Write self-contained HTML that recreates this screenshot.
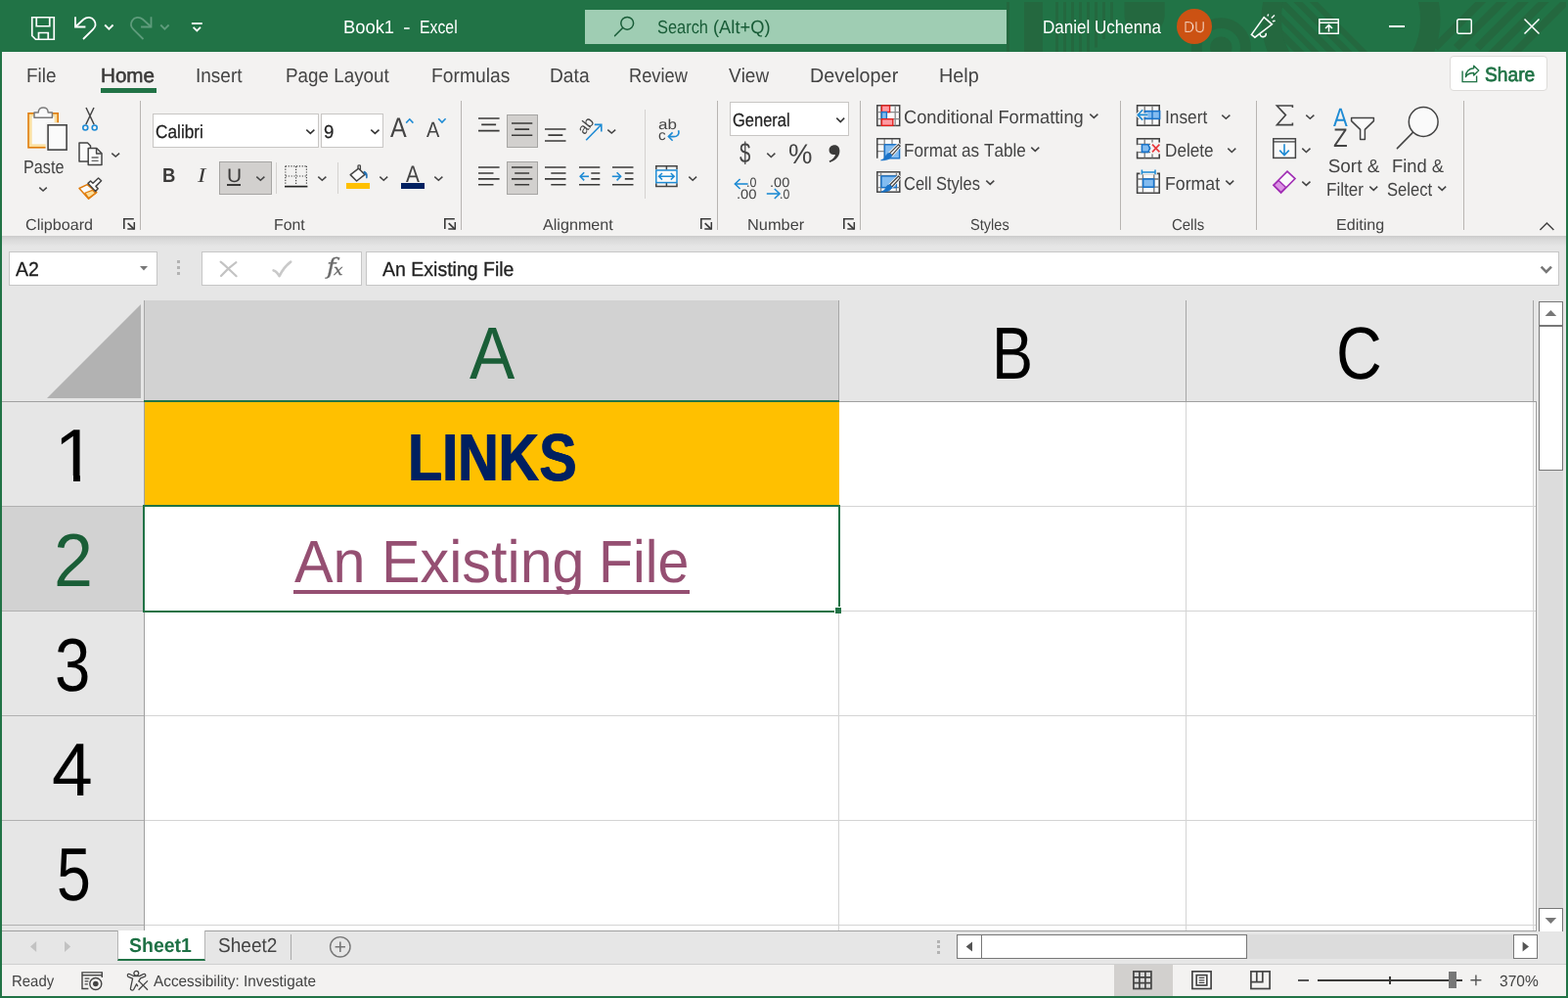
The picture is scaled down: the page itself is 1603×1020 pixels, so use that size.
<!DOCTYPE html>
<html lang="en"><head><meta charset="utf-8"><title>Book1 - Excel</title>
<style>
*{margin:0;padding:0;box-sizing:border-box}
html,body{width:1603px;height:1020px;overflow:hidden;background:#217346}
body{position:relative;font-family:"Liberation Sans",sans-serif;color:#444}
.r,.t,.i{position:absolute;display:block}
.t{white-space:nowrap;transform-origin:0 0;text-rendering:geometricPrecision;font-kerning:none}
.i{overflow:visible}
#app{position:absolute;left:0;top:0;width:1603px;height:1020px;will-change:transform}
</style></head>
<body>
<div id="app">
<!-- sec_title -->
<div class="r" style="left:0px;top:0px;width:1603px;height:53px;background:#217346;"></div>
<svg class="i" style="left:0px;top:0px;overflow:hidden;" width="1603" height="53" viewBox="0 0 1603 53"><defs><clipPath id="cpd"><circle cx="1381" cy="19.5" r="71.6"/></clipPath><clipPath id="cpt"><rect x="1029" y="2" width="572" height="51"/></clipPath></defs><g clip-path="url(#cpt)" fill="#24683f"><rect x="1029" y="2" width="3" height="51"/><rect x="1047" y="2" width="19" height="51"/><rect x="1079" y="2" width="3" height="51"/><rect x="1087" y="2" width="3" height="51"/><rect x="1095" y="2" width="3" height="51"/><rect x="1103" y="2" width="3" height="51"/><rect x="1111" y="2" width="3" height="51"/><rect x="1119" y="2" width="3" height="46.5"/><rect x="1127" y="2" width="3" height="38"/><rect x="1135" y="2" width="3" height="19.5"/><path d="M1149.5 2H1190.7V15A20.6 20.6 0 0 1 1149.5 15Z"/><circle cx="1248.3" cy="48.7" r="25.1" fill="none" stroke="#24683f" stroke-width="10.8"/><circle cx="1248.3" cy="48.7" r="11.2"/><circle cx="1381" cy="19.5" r="81.3" fill="none" stroke="#24683f" stroke-width="20.5"/><g clip-path="url(#cpd)"><path d="M1303.6 0L1312.9 0L1372.9 60L1363.6 60Z"/><path d="M1320.4 0L1329.3 0L1389.3 60L1380.4 60Z"/><path d="M1336.8 0L1345 0L1405 60L1396.8 60Z"/><path d="M1287.7 0L1295.5 0L1355.5 60L1347.7 60Z"/><path d="M1270 0L1280.3 0L1340.3 60L1330 60Z"/><path d="M1253 0L1263 0L1323 60L1313 60Z"/></g><path d="M1508.4 2L1519.2 2L1469.8 51.4L1464.4 46Z"/><path d="M1530 2L1541.2 2L1491.6 51.6L1486 46Z"/><path d="M1551.8 2L1562.9 2L1513.35 51.55L1507.8 46Z"/><path d="M1572.6 2L1583.4 2L1510 75.4L1504.6 70Z"/><path d="M1595 2L1606 2L1532.5 75.5L1527 70Z"/></g></svg>
<svg class="i" style="left:30px;top:15px;" width="28" height="28" viewBox="0 0 28 28"><g fill="none" stroke="#fff" stroke-width="1.7"><path d="M2.75 2.75H25.25V25.25H6.5L2.75 21.5Z"/><path d="M7.25 2.75V11.75H20.75V2.75"/><path d="M9.5 25.25V18.5H19.25V25.25"/></g></svg>
<svg class="i" style="left:74px;top:15px;" width="28" height="28" viewBox="0 0 28 28"><g fill="none" stroke="#fff" stroke-width="1.8" stroke-linecap="butt" stroke-linejoin="miter"><path d="M3 2.2V12.5H13.4"/><path d="M3.5 12L11.5 4.8C15 1.8 20 2.5 22.3 6C24.3 9.2 23.6 12.6 21 15.2L11 25"/></g></svg>
<svg class="i" style="left:105px;top:23px;" width="12" height="9" viewBox="0 0 12 9"><path d="M2.2 2.5L6.4 6.7L10.6 2.5" fill="none" stroke="#fff" stroke-width="1.8"/></svg>
<svg class="i" style="left:131px;top:15px;" width="28" height="28" viewBox="0 0 28 28"><g fill="none" stroke="#5f9c7c" stroke-width="1.8" stroke-linecap="butt" stroke-linejoin="miter"><path d="M23.5 2.2V12.5H13.1"/><path d="M23 12L15 4.8C11.5 1.8 6.5 2.5 4.2 6C2.2 9.2 2.9 12.6 5.5 15.2L15.5 25"/></g></svg>
<svg class="i" style="left:162px;top:23px;" width="12" height="9" viewBox="0 0 12 9"><path d="M2.2 2.5L6.4 6.7L10.6 2.5" fill="none" stroke="#5f9c7c" stroke-width="1.8"/></svg>
<svg class="i" style="left:194px;top:21px;" width="15" height="13" viewBox="0 0 15 13"><g fill="none" stroke="#fff" stroke-width="1.8"><path d="M1.9 3H12.8"/><path d="M3.6 6.9L7.3 10.4L11 6.9"/></g></svg>
<span class="t" style="left:350.59px;top:18px;font-size:18.9px;line-height:21px;color:#fff;transform:scaleX(0.9723);">Book1</span>
<span class="t" style="left:411.88px;top:18px;font-size:18.9px;line-height:21px;color:#fff;transform:scaleX(1.2136);">-</span>
<span class="t" style="left:428.8px;top:18px;font-size:18.9px;line-height:21px;color:#fff;transform:scaleX(0.8364);">Excel</span>
<div class="r" style="left:598px;top:10px;width:431px;height:35px;background:#9fcdb3;"></div>
<svg class="i" style="left:626px;top:15px;" width="24" height="24" viewBox="0 0 24 24"><g fill="none" stroke="#185c37" stroke-width="1.5"><circle cx="15.2" cy="8.8" r="6.4"/><path d="M10.6 13.4L2.6 21.6" stroke-linecap="round"/></g></svg>
<span class="t" style="left:672.15px;top:18px;font-size:18.9px;line-height:21px;color:#185c37;transform:scaleX(0.8685);">Search</span>
<span class="t" style="left:728.76px;top:18px;font-size:18.9px;line-height:21px;color:#185c37;transform:scaleX(0.9701);">(Alt+Q)</span>
<span class="t" style="left:1065.6px;top:18px;font-size:18.9px;line-height:21px;color:#fff;transform:scaleX(0.9004);">Daniel Uchenna</span>
<div class="r" style="left:1203px;top:9px;width:36px;height:36px;background:#cc5213;border-radius:50%;"></div>
<span class="t" style="left:1209.64px;top:20px;font-size:16px;line-height:17px;color:#fdf3ee;transform:scaleX(0.9581);-webkit-text-stroke:0.45px #cc5213;">DU</span>
<svg class="i" style="left:1277px;top:13px;" width="28" height="27" viewBox="0 0 28 27"><g fill="none" stroke="#fff" stroke-width="1.6" stroke-linejoin="miter"><path d="M2.4 22.4L15.2 4.6L23.4 11.8L5.9 25.2Z"/><path d="M11.2 22C11.4 26 17.8 25.4 17.2 20.8"/><path d="M18.9 3.6L19.7 1.4M22.8 5.6L26 2.4M23.9 8.8L26.6 8.3" stroke-width="1.4"/></g></svg>
<svg class="i" style="left:1347px;top:18px;" width="23" height="18" viewBox="0 0 23 18"><g fill="none" stroke="#fff" stroke-width="1.5"><path d="M1.75 1.75H21.25V16.25H1.75Z"/><path d="M1.75 5.2H21.25"/><path d="M11.5 14.5V8M8 11L11.5 7.6L15 11"/></g></svg>
<div class="r" style="left:1420px;top:26px;width:16px;height:1.5px;background:#fff;"></div>
<svg class="i" style="left:1488px;top:18px;" width="18" height="18" viewBox="0 0 18 18"><rect x="1.75" y="1.75" width="14.5" height="14.5" rx="1.5" fill="none" stroke="#fff" stroke-width="1.5"/></svg>
<svg class="i" style="left:1557px;top:18px;" width="18" height="18" viewBox="0 0 18 18"><path d="M1.5 1.5L16.5 16.5M16.5 1.5L1.5 16.5" fill="none" stroke="#fff" stroke-width="1.5"/></svg>
<!-- sec_tabs -->
<div class="r" style="left:2px;top:53px;width:1599px;height:188px;background:#f3f2f1;"></div>
<span class="t" style="left:27.05px;top:67px;font-size:20.35px;line-height:22px;color:#444;transform:scaleX(0.9299);">File</span>
<span class="t" style="left:199.75px;top:67px;font-size:20.35px;line-height:22px;color:#444;transform:scaleX(0.9331);">Insert</span>
<span class="t" style="left:292.15px;top:67px;font-size:20.35px;line-height:22px;color:#444;transform:scaleX(0.9256);">Page Layout</span>
<span class="t" style="left:441.32px;top:67px;font-size:20.35px;line-height:22px;color:#444;transform:scaleX(0.9466);">Formulas</span>
<span class="t" style="left:561.92px;top:67px;font-size:20.35px;line-height:22px;color:#444;transform:scaleX(0.9439);">Data</span>
<span class="t" style="left:643px;top:67px;font-size:20.35px;line-height:22px;color:#444;transform:scaleX(0.8986);">Review</span>
<span class="t" style="left:745.42px;top:67px;font-size:20.35px;line-height:22px;color:#444;transform:scaleX(0.9326);">View</span>
<span class="t" style="left:827.88px;top:67px;font-size:20.35px;line-height:22px;color:#444;transform:scaleX(0.973);">Developer</span>
<span class="t" style="left:960.17px;top:67px;font-size:20.35px;line-height:22px;color:#444;transform:scaleX(0.9738);">Help</span>
<span class="t" style="left:103.21px;top:67px;font-size:20.35px;line-height:22px;color:#3b3a39;transform:scaleX(1.0134);-webkit-text-stroke:0.55px #3b3a39;">Home</span>
<div class="r" style="left:103px;top:90px;width:57px;height:5px;background:#217346;"></div>
<div class="r" style="left:1482px;top:57px;width:100px;height:36px;background:#fff;border:1px solid #dddbd9;border-radius:4px;"></div>
<svg class="i" style="left:1493.8px;top:66px;" width="20" height="19" viewBox="0 0 20 19"><g fill="none" stroke="#217346" stroke-width="1.4" stroke-linejoin="round"><path d="M1.1 6.4V17.6H15.6V11.6" stroke-linejoin="miter"/><path d="M12.7 1.3L17.7 6.1L12.7 11.1V8.5C9 8.5 6.2 9.6 4.4 12.6C4.6 7.6 7.8 4.2 12.7 3.8Z"/></g></svg>
<span class="t" style="left:1517.93px;top:66px;font-size:20.35px;line-height:22px;color:#217346;transform:scaleX(0.9433);-webkit-text-stroke:0.7px #217346;">Share</span>
<!-- sec_ribbon -->
<!-- rib_clip -->
<svg class="i" style="left:26px;top:107px;" width="46" height="50" viewBox="0 0 46 50"><rect x="3" y="8.8" width="30.2" height="35" fill="#fbdf9e" stroke="#e07c0c" stroke-width="1.6"/>
<rect x="6.6" y="12" width="23" height="28.4" fill="#fafafa"/>
<path d="M9 13.2V8H13.2C13.2 4.6 15.6 2.9 18.2 2.9C20.8 2.9 23.2 4.6 23.2 8H27.4V13.2Z" fill="#fafafa" stroke="#7a7a7a" stroke-width="1.5" stroke-linejoin="round"/>
<rect x="22.3" y="20" width="20.6" height="26.9" fill="#fafafa" stroke="#f3f2f1" stroke-width="3.4"/>
<rect x="23.1" y="20.8" width="19" height="25.3" fill="#fafafa" stroke="#444" stroke-width="1.6"/></svg>
<span class="t" style="left:24.07px;top:161px;font-size:18.9px;line-height:21px;color:#444;transform:scaleX(0.8576);">Paste</span>
<svg class="i" style="left:39.2px;top:189.8px;" width="10.1" height="6.8" viewBox="0 0 10.1 6.8"><path d="M1.3 1.6L5.05 5.1L8.8 1.6" fill="none" stroke="#444" stroke-width="1.5"/></svg>
<svg class="i" style="left:83px;top:108.5px;" width="18" height="26" viewBox="0 0 18 26"><g fill="none" stroke-width="1.5"><path d="M5 1L13.2 18.2M13 1L4.8 18.2" stroke="#444"/>
<circle cx="4.3" cy="21.5" r="2.5" stroke="#1e8bd4" stroke-width="1.6"/><circle cx="13.7" cy="21.5" r="2.5" stroke="#1e8bd4" stroke-width="1.6"/></g></svg>
<svg class="i" style="left:79.5px;top:144.5px;" width="26" height="26" viewBox="0 0 26 26"><g fill="#fafafa" stroke="#444" stroke-width="1.5" stroke-linejoin="round"><path d="M1 1H9.5L12.5 4V20H1Z"/>
<path d="M10.2 6.5H18.8L24 11.7V23.6H10.2Z"/><path d="M18.6 6.8V12H23.8" fill="none"/><path d="M13.6 16H20.6M13.6 19.4H20.6" stroke="#666" stroke-width="1.3"/></g></svg>
<svg class="i" style="left:113.2px;top:155px;" width="10.4" height="6.8" viewBox="0 0 10.4 6.8"><path d="M1.3 1.6L5.2 5.1L9.1 1.6" fill="none" stroke="#444" stroke-width="1.5"/></svg>
<svg class="i" style="left:80px;top:180.5px;" width="26" height="24" viewBox="0 0 26 24"><g stroke-linejoin="round"><path d="M1 11.5L9.2 7.6L18.8 15.6L10.6 22.2Z" fill="#fafafa" stroke="#e07c0c" stroke-width="1.5"/>
<path d="M6.8 16.2L14.6 13.4L17.4 16.4L10.6 21.6Z" fill="#fbdf9e" stroke="#e07c0c" stroke-width="1.2"/>
<path d="M10 6.4L12.6 4L15 6.3L20.6 1L23.6 3.8L18 9.4L20.2 11.8L17.6 14.6Z" fill="#fafafa" stroke="#444" stroke-width="1.5"/></g></svg>
<span class="t" style="left:25.68px;top:222px;font-size:16px;line-height:17px;color:#444;transform:scaleX(1.0069);">Clipboard</span>
<svg class="i" style="left:126px;top:223px;" width="13" height="13" viewBox="0 0 13 13"><g fill="none" stroke="#3a3a3a" stroke-width="1.6"><path d="M0.8 11V0.8H10.8"/><path d="M4.7 5.1L11 11.2" stroke-width="1.7"/><path d="M4.3 11.1H11.3V4.1" stroke-width="1.5"/></g></svg>
<div class="r" style="left:143px;top:103px;width:1px;height:132px;background:#b8b5b2;"></div>
<!-- rib_font -->
<div class="r" style="left:156px;top:116px;width:170px;height:35px;background:#fff;border:1px solid #c8c6c4;"></div>
<span class="t" style="left:158.82px;top:125px;font-size:18.9px;line-height:21px;color:#222;transform:scaleX(0.9137);-webkit-text-stroke:0.25px #222;">Calibri</span>
<svg class="i" style="left:312px;top:130.8px;" width="10.7" height="7.1" viewBox="0 0 10.7 7.1"><path d="M1.3 1.6L5.35 5.4L9.4 1.6" fill="none" stroke="#333" stroke-width="1.5"/></svg>
<div class="r" style="left:328px;top:116px;width:64px;height:35px;background:#fff;border:1px solid #c8c6c4;"></div>
<span class="t" style="left:330.93px;top:125px;font-size:18.9px;line-height:21px;color:#222;transform:scaleX(0.9851);-webkit-text-stroke:0.25px #222;">9</span>
<svg class="i" style="left:378px;top:130.8px;" width="10.8" height="7.1" viewBox="0 0 10.8 7.1"><path d="M1.3 1.6L5.4 5.4L9.5 1.6" fill="none" stroke="#333" stroke-width="1.5"/></svg>
<span class="t" style="left:399.35px;top:114px;font-size:28.3px;line-height:32px;color:#444;transform:scaleX(0.8846);">A</span>
<svg class="i" style="left:413.6px;top:120.2px;" width="10" height="7" viewBox="0 0 10 7"><path d="M1.2 5.6L4.8 1.8L8.4 5.6" fill="none" stroke="#1e8bd4" stroke-width="1.6"/></svg>
<span class="t" style="left:435.86px;top:120px;font-size:22px;line-height:25px;color:#444;transform:scaleX(0.9049);">A</span>
<svg class="i" style="left:447.4px;top:120.4px;" width="10" height="7" viewBox="0 0 10 7"><path d="M1.2 1.2L4.9 5L8.6 1.2" fill="none" stroke="#1e8bd4" stroke-width="1.6"/></svg>
<span class="t" style="left:165.56px;top:169px;font-size:20.2px;line-height:22px;color:#3b3a39;transform:scaleX(0.9173);font-weight:700;">B</span>
<span class="t" style="left:201.7px;top:167px;font-size:21px;line-height:24px;color:#3b3a39;transform:scaleX(1.1906);font-style:italic;font-family:'Liberation Serif',serif;">I</span>
<div class="r" style="left:224px;top:165px;width:54px;height:34px;background:#d2d0ce;border:1px solid #a6a5a3;"></div>
<span class="t" style="left:231.58px;top:169px;font-size:19.6px;line-height:22px;color:#3b3a39;transform:scaleX(1.0692);">U</span>
<div class="r" style="left:232.3px;top:188.2px;width:13.8px;height:1.5px;background:#3b3a39;"></div>
<svg class="i" style="left:260.8px;top:179px;" width="10.7" height="7" viewBox="0 0 10.7 7"><path d="M1.3 1.6L5.35 5.3L9.4 1.6" fill="none" stroke="#444" stroke-width="1.5"/></svg>
<div class="r" style="left:282px;top:166px;width:1px;height:32px;background:#d4d2d0;"></div>
<svg class="i" style="left:291px;top:169px;" width="24" height="23" viewBox="0 0 24 23"><g fill="none" stroke="#444" stroke-width="1.2" stroke-dasharray="1.2 1.6"><path d="M0.8 0.8H22.6M0.8 0.8V20M22.4 0.8V20M11.6 1V20M1 11H22.4"/></g><path d="M0 21.6H23.4" stroke="#222" stroke-width="1.7"/></svg>
<svg class="i" style="left:324px;top:179px;" width="10.7" height="7" viewBox="0 0 10.7 7"><path d="M1.3 1.6L5.35 5.3L9.4 1.6" fill="none" stroke="#444" stroke-width="1.5"/></svg>
<div class="r" style="left:345px;top:166px;width:1px;height:32px;background:#d4d2d0;"></div>
<svg class="i" style="left:357px;top:168.4px;" width="21" height="19" viewBox="0 0 21 19"><g fill="none" stroke-linejoin="round"><path d="M9.6 4.2L16 10.4L7.6 17L1.2 10.6Z" fill="#fafafa" stroke="#444" stroke-width="1.5"/><path d="M9 4.6V1.6C9 0.6 11.4 0.6 11.4 1.6V6" stroke="#444" stroke-width="1.3"/>
<path d="M15 7.2C17.8 7.6 19 10.6 17.8 14.2C17.6 11.6 17 10.2 15.6 9.4Z" fill="#1e6fb4" stroke="#1e6fb4" stroke-width="1"/></g></svg>
<div class="r" style="left:354px;top:187px;width:24px;height:6px;background:#ffc000;"></div>
<svg class="i" style="left:387px;top:179px;" width="10.5" height="7" viewBox="0 0 10.5 7"><path d="M1.3 1.6L5.25 5.3L9.2 1.6" fill="none" stroke="#444" stroke-width="1.5"/></svg>
<span class="t" style="left:415.26px;top:165px;font-size:24px;line-height:27px;color:#444;transform:scaleX(0.8672);">A</span>
<div class="r" style="left:410px;top:187px;width:24px;height:6px;background:#002060;"></div>
<svg class="i" style="left:442.9px;top:179px;" width="10.7" height="7" viewBox="0 0 10.7 7"><path d="M1.3 1.6L5.35 5.3L9.4 1.6" fill="none" stroke="#444" stroke-width="1.5"/></svg>
<span class="t" style="left:279.6px;top:222px;font-size:16px;line-height:17px;color:#444;transform:scaleX(0.9907);">Font</span>
<svg class="i" style="left:454px;top:223px;" width="13" height="13" viewBox="0 0 13 13"><g fill="none" stroke="#3a3a3a" stroke-width="1.6"><path d="M0.8 11V0.8H10.8"/><path d="M4.7 5.1L11 11.2" stroke-width="1.7"/><path d="M4.3 11.1H11.3V4.1" stroke-width="1.5"/></g></svg>
<div class="r" style="left:471px;top:103px;width:1px;height:132px;background:#b8b5b2;"></div>
<!-- rib_align -->
<div class="r" style="left:518px;top:117px;width:32px;height:34px;background:#d2d0ce;border:1px solid #a6a5a3;"></div>
<div class="r" style="left:518px;top:165px;width:32px;height:34px;background:#d2d0ce;border:1px solid #a6a5a3;"></div>
<svg class="i" style="left:488.3px;top:119.2px;" width="23.6" height="16.6" viewBox="0 0 23.6 16.6"><path d="M1 2H22.6M4.2 8.4H19.1M1 14.6H22.6" fill="none" stroke="#3b3a39" stroke-width="1.6"/></svg>
<svg class="i" style="left:522.4px;top:124px;" width="23.3" height="16.2" viewBox="0 0 23.3 16.2"><path d="M1 2H22.3M4.2 8.1H19.1M1 14.2H22.3" fill="none" stroke="#3b3a39" stroke-width="1.6"/></svg>
<svg class="i" style="left:556.3px;top:130.1px;" width="23.5" height="16" viewBox="0 0 23.5 16"><path d="M1 2H22.5M4.4 8.1H19.3M1 14H22.5" fill="none" stroke="#3b3a39" stroke-width="1.6"/></svg>
<span class="t" style="left:591px;top:119.5px;font-size:15.5px;line-height:18px;color:#444;transform:rotate(-52deg);transform-origin:50% 50%;">ab</span>
<svg class="i" style="left:597px;top:125px;" width="20" height="20" viewBox="0 0 20 20"><g fill="none" stroke="#1e8bd4" stroke-width="1.6"><path d="M2.2 18.2L17.4 2.8"/><path d="M10.8 2.4H17.8V9.4"/></g></svg>
<svg class="i" style="left:620.1px;top:131.1px;" width="10.5" height="6.8" viewBox="0 0 10.5 6.8"><path d="M1.3 1.6L5.25 5.1L9.2 1.6" fill="none" stroke="#444" stroke-width="1.5"/></svg>
<svg class="i" style="left:488.3px;top:169.3px;" width="23.6" height="21.8" viewBox="0 0 23.6 21.8"><path d="M1 2H22.6M1 8H16.5M1 13.9H22.6M1 19.8H16.5" fill="none" stroke="#3b3a39" stroke-width="1.6"/></svg>
<svg class="i" style="left:522.4px;top:169.3px;" width="23.3" height="21.8" viewBox="0 0 23.3 21.8"><path d="M1 2H22.3M4.2 8H19.1M1 13.9H22.3M4.2 19.8H19.1" fill="none" stroke="#3b3a39" stroke-width="1.6"/></svg>
<svg class="i" style="left:556.3px;top:169.3px;" width="23.5" height="21.8" viewBox="0 0 23.5 21.8"><path d="M1 2H22.5M7.3 8H22.5M1 13.9H22.5M7.3 19.8H22.5" fill="none" stroke="#3b3a39" stroke-width="1.6"/></svg>
<svg class="i" style="left:591.3px;top:169.3px;" width="23.3" height="21.8" viewBox="0 0 23.3 21.8"><path d="M1 2H22.3M13.3 8H22.3M13.3 13.9H22.3M1 19.8H22.3" fill="none" stroke="#3b3a39" stroke-width="1.6"/></svg>
<svg class="i" style="left:591.5px;top:175px;" width="11" height="11" viewBox="0 0 11 11"><g fill="none" stroke="#1e8bd4" stroke-width="1.6"><path d="M1.2 5.3H10"/><path d="M5.2 1.2L1.2 5.3L5.2 9.4"/></g></svg>
<svg class="i" style="left:625.2px;top:169.3px;" width="23.5" height="21.8" viewBox="0 0 23.5 21.8"><path d="M1 2H22.5M13.8 8H22.5M13.8 13.9H22.5M1 19.8H22.5" fill="none" stroke="#3b3a39" stroke-width="1.6"/></svg>
<svg class="i" style="left:625.4px;top:175px;" width="11" height="11" viewBox="0 0 11 11"><g fill="none" stroke="#1e8bd4" stroke-width="1.6"><path d="M0.8 5.3H9.6"/><path d="M5.6 1.2L9.6 5.3L5.6 9.4"/></g></svg>
<div class="r" style="left:659px;top:112px;width:1px;height:91px;background:#d4d2d0;"></div>
<span class="t" style="left:672.98px;top:120px;font-size:14.6px;line-height:16px;color:#444;transform:scaleX(1.1662);">ab</span>
<span class="t" style="left:673.05px;top:131px;font-size:14.6px;line-height:16px;color:#444;transform:scaleX(1.0485);">c</span>
<svg class="i" style="left:681.5px;top:132px;" width="14" height="14" viewBox="0 0 14 14"><g fill="none" stroke="#1e8bd4" stroke-width="1.6"><path d="M11.6 1.2C13 5.6 10 8 6 7.6H1.6"/><path d="M5.6 3.4L1.4 7.6L5.6 11.8"/></g></svg>
<svg class="i" style="left:670px;top:169px;" width="23" height="23" viewBox="0 0 23 23"><g fill="none" stroke-width="1.5"><path d="M0.8 4V0.8H22V4M0.8 18.2V21.6H22V18.2M11.4 0.8V4.6M11.4 17.6V21.6" stroke="#444"/>
<rect x="0.8" y="5" width="21.2" height="12.6" fill="#fafafa" stroke="#1e8bd4"/><path d="M3.6 11.3H19.2M7 8L3.6 11.3L7 14.6M15.8 8L19.2 11.3L15.8 14.6" stroke="#1e8bd4"/></g></svg>
<svg class="i" style="left:703.1px;top:179px;" width="10.4" height="7" viewBox="0 0 10.4 7"><path d="M1.3 1.6L5.2 5.3L9.1 1.6" fill="none" stroke="#444" stroke-width="1.5"/></svg>
<span class="t" style="left:554.57px;top:222px;font-size:16px;line-height:17px;color:#444;transform:scaleX(1.0085);">Alignment</span>
<svg class="i" style="left:716px;top:223px;" width="13" height="13" viewBox="0 0 13 13"><g fill="none" stroke="#3a3a3a" stroke-width="1.6"><path d="M0.8 11V0.8H10.8"/><path d="M4.7 5.1L11 11.2" stroke-width="1.7"/><path d="M4.3 11.1H11.3V4.1" stroke-width="1.5"/></g></svg>
<div class="r" style="left:733px;top:103px;width:1px;height:132px;background:#b8b5b2;"></div>
<!-- rib_number -->
<div class="r" style="left:746px;top:104px;width:122px;height:35px;background:#fff;border:1px solid #c8c6c4;"></div>
<span class="t" style="left:748.97px;top:113px;font-size:18.9px;line-height:21px;color:#222;transform:scaleX(0.8735);-webkit-text-stroke:0.25px #222;">General</span>
<svg class="i" style="left:854px;top:118.8px;" width="10.5" height="7.3" viewBox="0 0 10.5 7.3"><path d="M1.3 1.6L5.25 5.6L9.2 1.6" fill="none" stroke="#333" stroke-width="1.5"/></svg>
<span class="t" style="left:755.58px;top:141px;font-size:29px;line-height:32px;color:#444;transform:scaleX(0.7036);">$</span>
<svg class="i" style="left:783px;top:154.6px;" width="10.7" height="7.2" viewBox="0 0 10.7 7.2"><path d="M1.3 1.6L5.35 5.5L9.4 1.6" fill="none" stroke="#444" stroke-width="1.5"/></svg>
<span class="t" style="left:805.92px;top:142px;font-size:28.5px;line-height:32px;color:#444;transform:scaleX(0.9653);">%</span>
<svg class="i" style="left:846px;top:147px;" width="14" height="20" viewBox="0 0 14 20"><path d="M7.2 1.2C10.6 1.2 12.4 3.8 12.4 7.2C12.4 12.4 8.8 16.6 2.4 19L1.6 17.6C5.4 15.8 7.6 13.6 8 11C4.6 11.6 1.6 9.6 1.6 6.4C1.6 3.4 4 1.2 7.2 1.2Z" fill="#3b3a39"/></svg>
<svg class="i" style="left:749.5px;top:182px;" width="16" height="12" viewBox="0 0 16 12"><g fill="none" stroke="#1e8bd4" stroke-width="1.6"><path d="M1.4 6H14.6"/><path d="M6.6 1L1.4 6L6.6 11"/></g></svg>
<span class="t" style="left:763.16px;top:179px;font-size:13.6px;line-height:15px;color:#444;transform:scaleX(0.9196);">.0</span>
<span class="t" style="left:753.04px;top:191px;font-size:13.6px;line-height:15px;color:#444;transform:scaleX(1.0915);">.00</span>
<span class="t" style="left:787.17px;top:179px;font-size:13.6px;line-height:15px;color:#444;transform:scaleX(1.074);">.00</span>
<svg class="i" style="left:783.4px;top:192.4px;" width="16" height="12" viewBox="0 0 16 12"><g fill="none" stroke="#1e8bd4" stroke-width="1.6"><path d="M0.8 6H13.8"/><path d="M8.8 1L14 6L8.8 11"/></g></svg>
<span class="t" style="left:797.07px;top:191px;font-size:13.6px;line-height:15px;color:#444;transform:scaleX(0.9092);">.0</span>
<span class="t" style="left:764.46px;top:222px;font-size:16px;line-height:17px;color:#444;transform:scaleX(1.023);">Number</span>
<svg class="i" style="left:862px;top:223px;" width="13" height="13" viewBox="0 0 13 13"><g fill="none" stroke="#3a3a3a" stroke-width="1.6"><path d="M0.8 11V0.8H10.8"/><path d="M4.7 5.1L11 11.2" stroke-width="1.7"/><path d="M4.3 11.1H11.3V4.1" stroke-width="1.5"/></g></svg>
<div class="r" style="left:879px;top:103px;width:1px;height:132px;background:#b8b5b2;"></div>
<!-- rib_styles -->
<svg class="i" style="left:895.5px;top:106.8px;" width="25" height="22.5" viewBox="0 0 25 22.5"><rect x="0.8" y="0.8" width="22.9" height="20.6" fill="#fafafa" stroke="#444" stroke-width="1.5"/>
<path d="M4.8 1V21.4M19.2 1V21.4M1 7.6H23.6M1 14.6H23.6" fill="none" stroke="#8a8a8a" stroke-width="1.3"/>
<rect x="5.4" y="0.9" width="8.2" height="6.6" fill="#ff9aa2" stroke="#e0211d" stroke-width="1.4"/>
<rect x="5.4" y="7.6" width="5" height="7" fill="#83bcf0" stroke="#1a73c8" stroke-width="1.4"/><rect x="4.7" y="7.9" width="6.6" height="1" fill="#fafafa" opacity="0"/>
<rect x="5.4" y="14.7" width="11.4" height="6.6" fill="#ff9aa2" stroke="#e0211d" stroke-width="1.4"/></svg>
<span class="t" style="left:923.57px;top:110px;font-size:18.9px;line-height:21px;color:#444;transform:scaleX(0.9667);">Conditional Formatting</span>
<svg class="i" style="left:1113.2px;top:115.1px;" width="10.7" height="7.1" viewBox="0 0 10.7 7.1"><path d="M1.3 1.6L5.35 5.4L9.4 1.6" fill="none" stroke="#444" stroke-width="1.5"/></svg>
<svg class="i" style="left:895.5px;top:141px;" width="26" height="25" viewBox="0 0 26 25"><path d="M1 0.8H23.8V21H1Z" fill="#fafafa" stroke="none"/>
<path d="M8.2 1V21M16 1V21M1 6.6H23.6M1 13.6H23.6" fill="none" stroke="#8a8a8a" stroke-width="1.3"/>
<rect x="8.4" y="6.8" width="15.2" height="14" fill="#83bcf0" stroke="#1a73c8" stroke-width="1.4"/>
<path d="M0.8 20.8V0.8H23.8V6.4" fill="none" stroke="#444" stroke-width="1.5"/><path d="M22.6 6.6 L24.3 8.2 L15.8 17.6 L13.6 15.6Z" fill="#fafafa" stroke="#f3f2f1" stroke-width="3" stroke-linejoin="round"/><path d="M22.6 6.6 L24.3 8.2 L15.8 17.6 L13.6 15.6Z" fill="#fafafa" stroke="#444" stroke-width="1.2" stroke-linejoin="round"/><path d="M13.4 15.4 L16 17.8 C15.2 20.4 11.8 23 4.6 22.8 C7.4 21.8 8.8 20.4 9.4 18.8 C10 17 11.4 15.6 13.4 15.4Z" fill="#1a73c8" stroke="#1a73c8" stroke-width="0.8" stroke-linejoin="round"/></svg>
<span class="t" style="left:923.79px;top:144px;font-size:18.9px;line-height:21px;color:#444;transform:scaleX(0.9075);">Format as Table</span>
<svg class="i" style="left:1053.1px;top:149.2px;" width="10.6" height="7.1" viewBox="0 0 10.6 7.1"><path d="M1.3 1.6L5.3 5.4L9.3 1.6" fill="none" stroke="#444" stroke-width="1.5"/></svg>
<svg class="i" style="left:895.5px;top:175px;" width="26" height="25" viewBox="0 0 26 25"><rect x="0.8" y="0.8" width="23" height="20.4" fill="#fafafa" stroke="#444" stroke-width="1.5"/>
<path d="M4.6 1V21M20.4 1V21M1 4.4H23.6M1 16.6H23.6" fill="none" stroke="#8a8a8a" stroke-width="1.3"/>
<rect x="5" y="5" width="15.4" height="11.6" fill="#83bcf0" stroke="#1a73c8" stroke-width="1.4"/><path d="M22.6 5 L24.3 6.6 L15.8 16 L13.6 14Z" fill="#fafafa" stroke="#f3f2f1" stroke-width="3" stroke-linejoin="round"/><path d="M22.6 5 L24.3 6.6 L15.8 16 L13.6 14Z" fill="#fafafa" stroke="#444" stroke-width="1.2" stroke-linejoin="round"/><path d="M13.4 13.8 L16 16.2 C15.2 18.8 11.8 21.4 4.6 21.2 C7.4 20.2 8.8 18.8 9.4 17.2 C10 15.4 11.4 14 13.4 13.8Z" fill="#1a73c8" stroke="#1a73c8" stroke-width="0.8" stroke-linejoin="round"/></svg>
<span class="t" style="left:923.66px;top:178px;font-size:18.9px;line-height:21px;color:#444;transform:scaleX(0.8729);">Cell Styles</span>
<svg class="i" style="left:1007px;top:183px;" width="10.6" height="7.1" viewBox="0 0 10.6 7.1"><path d="M1.3 1.6L5.3 5.4L9.3 1.6" fill="none" stroke="#444" stroke-width="1.5"/></svg>
<span class="t" style="left:991.94px;top:222px;font-size:16px;line-height:17px;color:#444;transform:scaleX(0.9133);">Styles</span>
<div class="r" style="left:1145px;top:103px;width:1px;height:132px;background:#b8b5b2;"></div>
<!-- rib_cells -->
<svg class="i" style="left:1161px;top:107.2px;" width="26" height="22" viewBox="0 0 26 22"><rect x="1.6" y="0.8" width="22.6" height="20.4" fill="#fafafa" stroke="#444" stroke-width="1.6"/>
<path d="M9.2 1V21M17 1V21M1.6 6.6H24.2M1.6 14.4H24.2" fill="none" stroke="#777" stroke-width="1.3"/>
<rect x="9.6" y="6.6" width="15" height="7.8" fill="#83bcf0" stroke="#1a73c8" stroke-width="1.6"/><path d="M17 6.6V14.4" stroke="#1a73c8" stroke-width="1.4"/>
<path d="M7.2 5.2L2.2 10.4L7.2 15.6M2.4 10.4H12.4" fill="none" stroke="#f3f2f1" stroke-width="4"/>
<path d="M7.2 5.2L2.2 10.4L7.2 15.6M2.4 10.4H12.4" fill="none" stroke="#1e8bd4" stroke-width="1.6"/></svg>
<span class="t" style="left:1190.91px;top:110px;font-size:18.9px;line-height:21px;color:#444;transform:scaleX(0.9144);">Insert</span>
<svg class="i" style="left:1248.1px;top:115.6px;" width="10.7" height="6.9" viewBox="0 0 10.7 6.9"><path d="M1.3 1.6L5.35 5.2L9.4 1.6" fill="none" stroke="#444" stroke-width="1.5"/></svg>
<svg class="i" style="left:1161px;top:141.2px;" width="27" height="22" viewBox="0 0 27 22"><rect x="1.6" y="0.8" width="22.6" height="19.8" fill="#fafafa" stroke="#444" stroke-width="1.6"/>
<path d="M9.2 1V20.4M17 1V20.4M1.6 6.4H24.2M1.6 14.6H24.2" fill="none" stroke="#777" stroke-width="1.3"/>
<rect x="15" y="4.6" width="11" height="11.8" fill="#f3f2f1"/><rect x="0" y="7.2" width="5" height="6.6" fill="#f3f2f1"/>
<path d="M6.4 6.8H12.8L14.6 10.6L12.8 14.4H6.4Z" fill="#83bcf0" stroke="#1a73c8" stroke-width="1.6"/>
<path d="M17 6.6L24.4 14.4M24.4 6.6L17 14.4" fill="none" stroke="#e8383c" stroke-width="1.6"/></svg>
<span class="t" style="left:1190.99px;top:144px;font-size:18.9px;line-height:21px;color:#444;transform:scaleX(0.9073);">Delete</span>
<svg class="i" style="left:1254px;top:149.5px;" width="10.6" height="7.2" viewBox="0 0 10.6 7.2"><path d="M1.3 1.6L5.3 5.5L9.3 1.6" fill="none" stroke="#444" stroke-width="1.5"/></svg>
<svg class="i" style="left:1161px;top:173.4px;" width="27" height="25" viewBox="0 0 27 25"><path d="M1.6 4.4H24.2V24.2H1.6Z" fill="#fafafa" stroke="#444" stroke-width="1.6"/>
<path d="M7.4 4.4V24M18.8 4.4V24M1.6 10H24.2M1.6 18.2H24.2" fill="none" stroke="#777" stroke-width="1.3"/>
<rect x="4.4" y="0" width="17.4" height="5.4" fill="#f3f2f1"/>
<path d="M6.4 0.6V5.2M20 0.6V5.2M6.4 2.9H20" fill="none" stroke="#1e8bd4" stroke-width="1.5"/>
<rect x="7.6" y="10" width="11" height="8.2" fill="#83bcf0" stroke="#1a73c8" stroke-width="1.6"/></svg>
<span class="t" style="left:1190.95px;top:178px;font-size:18.9px;line-height:21px;color:#444;transform:scaleX(0.937);">Format</span>
<svg class="i" style="left:1252.1px;top:183px;" width="10.5" height="7.1" viewBox="0 0 10.5 7.1"><path d="M1.3 1.6L5.25 5.4L9.2 1.6" fill="none" stroke="#444" stroke-width="1.5"/></svg>
<span class="t" style="left:1197.74px;top:222px;font-size:16px;line-height:17px;color:#444;transform:scaleX(0.9335);">Cells</span>
<div class="r" style="left:1284px;top:103px;width:1px;height:132px;background:#b8b5b2;"></div>
<!-- rib_edit -->
<svg class="i" style="left:1303.4px;top:107px;" width="20" height="22" viewBox="0 0 20 22"><path d="M18.4 3V1H2.4L11.4 10.6L2.4 20.6H18.4V18.6" fill="none" stroke="#444" stroke-width="1.6"/></svg>
<svg class="i" style="left:1334px;top:115.6px;" width="10.7" height="6.9" viewBox="0 0 10.7 6.9"><path d="M1.3 1.6L5.35 5.2L9.4 1.6" fill="none" stroke="#444" stroke-width="1.5"/></svg>
<svg class="i" style="left:1300.6px;top:141px;" width="25" height="22" viewBox="0 0 25 22"><rect x="0.8" y="0.8" width="22.6" height="19.6" fill="#fafafa" stroke="#444" stroke-width="1.5"/><path d="M1 3.9H23.4" stroke="#444" stroke-width="1.3"/>
<path d="M12 6.2V17.4M7.2 12.6L12 17.6L16.8 12.6" fill="none" stroke="#1e8bd4" stroke-width="1.6"/></svg>
<svg class="i" style="left:1330px;top:149.5px;" width="10.8" height="7.2" viewBox="0 0 10.8 7.2"><path d="M1.3 1.6L5.4 5.5L9.5 1.6" fill="none" stroke="#444" stroke-width="1.5"/></svg>
<svg class="i" style="left:1300.8px;top:173.8px;" width="24" height="24" viewBox="0 0 24 24"><g stroke-linejoin="miter"><path d="M15 1.2L23 8.6L8.6 23L0.9 15.2Z" fill="#fafafa" stroke="#a02db4" stroke-width="1.6"/>
<path d="M6.2 10.6L13.6 17.6L8.6 22.6L1.2 15.2Z" fill="#db92e4" stroke="#a02db4" stroke-width="1.4"/></g></svg>
<svg class="i" style="left:1330px;top:183.6px;" width="10.8" height="7.1" viewBox="0 0 10.8 7.1"><path d="M1.3 1.6L5.4 5.4L9.5 1.6" fill="none" stroke="#444" stroke-width="1.5"/></svg>
<span class="t" style="left:1363.16px;top:105px;font-size:26.6px;line-height:30px;color:#1e8bd4;transform:scaleX(0.8278);">A</span>
<span class="t" style="left:1362.54px;top:126px;font-size:26.9px;line-height:30px;color:#444;transform:scaleX(0.8957);">Z</span>
<svg class="i" style="left:1380px;top:118.5px;" width="26" height="26" viewBox="0 0 26 26"><path d="M1.6 1.6H24.4V4.6L15.4 13.4V23.4H10.6V13.4L1.6 4.6Z" fill="#fafafa" stroke="#444" stroke-width="1.5" stroke-linejoin="round"/></svg>
<span class="t" style="left:1357.74px;top:160px;font-size:18.9px;line-height:21px;color:#444;">Sort &amp;</span>
<span class="t" style="left:1356.4px;top:184px;font-size:18.9px;line-height:21px;color:#444;transform:scaleX(0.902);">Filter</span>
<svg class="i" style="left:1399.2px;top:188.8px;" width="10.5" height="7.1" viewBox="0 0 10.5 7.1"><path d="M1.3 1.6L5.25 5.4L9.2 1.6" fill="none" stroke="#444" stroke-width="1.5"/></svg>
<svg class="i" style="left:1426px;top:108px;" width="46" height="46" viewBox="0 0 46 46"><circle cx="29.2" cy="16.5" r="14.9" fill="#fafafa" stroke="#444" stroke-width="1.5"/><path d="M18.4 27.4L2.4 43.6" stroke="#444" stroke-width="1.5" stroke-linecap="round"/></svg>
<span class="t" style="left:1423.19px;top:160px;font-size:18.9px;line-height:21px;color:#444;transform:scaleX(0.972);">Find &amp;</span>
<span class="t" style="left:1417.95px;top:184px;font-size:18.9px;line-height:21px;color:#444;transform:scaleX(0.8791);">Select</span>
<svg class="i" style="left:1469.1px;top:188.8px;" width="10.5" height="7.1" viewBox="0 0 10.5 7.1"><path d="M1.3 1.6L5.25 5.4L9.2 1.6" fill="none" stroke="#444" stroke-width="1.5"/></svg>
<span class="t" style="left:1365.58px;top:222px;font-size:16px;line-height:17px;color:#444;transform:scaleX(1.0048);">Editing</span>
<div class="r" style="left:1496px;top:103px;width:1px;height:132px;background:#b8b5b2;"></div>
<svg class="i" style="left:1573px;top:226px;" width="17" height="11" viewBox="0 0 17 11"><path d="M1.4 9L8.4 2L15.4 9" fill="none" stroke="#444" stroke-width="1.5"/></svg>
<!-- sec_formula -->
<div class="r" style="left:2px;top:241px;width:1599px;height:777px;background:#e6e6e6;"></div>
<div class="r" style="left:2px;top:241px;width:1599px;height:11px;background:linear-gradient(#cbcbcb,#d9d9d9 35%,#e6e6e6);"></div>
<div class="r" style="left:9px;top:257px;width:152px;height:35px;background:#fff;border:1px solid #c6c6c6;"></div>
<span class="t" style="left:16.36px;top:265px;font-size:20.35px;line-height:22px;color:#222;transform:scaleX(0.9569);-webkit-text-stroke:0.3px #222;">A2</span>
<svg class="i" style="left:142.5px;top:272px;" width="8" height="5" viewBox="0 0 8 5"><path d="M0 0H8L4 4.4Z" fill="#777"/></svg>
<div class="r" style="left:181px;top:266.4px;width:3px;height:3px;background:#b3b3b3;"></div>
<div class="r" style="left:181px;top:272px;width:3px;height:3px;background:#b3b3b3;"></div>
<div class="r" style="left:181px;top:277.8px;width:3px;height:3px;background:#b3b3b3;"></div>
<div class="r" style="left:206px;top:257px;width:164px;height:35px;background:#fff;border:1px solid #c6c6c6;"></div>
<svg class="i" style="left:224px;top:265.5px;" width="20" height="18" viewBox="0 0 20 18"><path d="M1.6 1.6C6 5 12 11 17.6 16.2M17.4 2.2C12 6 6 11.6 2 16" fill="none" stroke="#c3c3c3" stroke-width="2.2" stroke-linecap="round"/></svg>
<svg class="i" style="left:278px;top:265.5px;" width="21" height="18" viewBox="0 0 21 18"><path d="M1.6 10.4C4 11 6 13 7.6 16.2C10.6 10 14.6 5 19.2 1.6" fill="none" stroke="#c9c9c9" stroke-width="2.6" stroke-linecap="round" stroke-linejoin="round"/></svg>
<span class="t" style="left:333.78px;top:260px;font-size:22.6px;line-height:26px;color:#6a6a6a;transform:scaleX(1.1289);font-style:italic;font-family:'DejaVu Serif',serif;-webkit-text-stroke:0.3px #6a6a6a;">f</span>
<span class="t" style="left:341.36px;top:267px;font-size:15.6px;line-height:19px;color:#6a6a6a;transform:scaleX(1.0774);font-style:italic;font-family:'DejaVu Serif',serif;-webkit-text-stroke:0.3px #6a6a6a;">x</span>
<div class="r" style="left:374px;top:257px;width:1220px;height:35px;background:#fff;border:1px solid #c6c6c6;"></div>
<span class="t" style="left:391.36px;top:265px;font-size:20.35px;line-height:22px;color:#222;transform:scaleX(0.9591);-webkit-text-stroke:0.3px #222;">An Existing File</span>
<svg class="i" style="left:1574px;top:271px;" width="14" height="10" viewBox="0 0 14 10"><path d="M1.6 1.6L6.8 6.8L12 1.6" fill="none" stroke="#777" stroke-width="2.6"/></svg>
<!-- sec_grid -->
<div class="r" style="left:148px;top:411px;width:1423px;height:541px;background:#fff;"></div>
<div class="r" style="left:148px;top:307px;width:709px;height:102px;background:#d2d2d2;"></div>
<div class="r" style="left:2px;top:518px;width:144px;height:106px;background:#d2d2d2;"></div>
<svg class="i" style="left:48px;top:311px;" width="96" height="96" viewBox="0 0 96 96"><path d="M96 0V96H0Z" fill="#b2b2b2"/></svg>
<div class="r" style="left:147px;top:307px;width:1px;height:103px;background:#a6a6a6;"></div>
<div class="r" style="left:857px;top:307px;width:1px;height:103px;background:#a6a6a6;"></div>
<div class="r" style="left:1212px;top:307px;width:1px;height:103px;background:#a6a6a6;"></div>
<div class="r" style="left:1567px;top:307px;width:1px;height:103px;background:#a6a6a6;"></div>
<div class="r" style="left:2px;top:410px;width:1569px;height:1px;background:#a0a0a0;"></div>
<div class="r" style="left:147px;top:410px;width:1px;height:541px;background:#a0a0a0;"></div>
<div class="r" style="left:2px;top:517px;width:145px;height:1px;background:#b0b0b0;"></div>
<div class="r" style="left:2px;top:624px;width:145px;height:1px;background:#b0b0b0;"></div>
<div class="r" style="left:2px;top:731px;width:145px;height:1px;background:#b0b0b0;"></div>
<div class="r" style="left:2px;top:838px;width:145px;height:1px;background:#b0b0b0;"></div>
<div class="r" style="left:2px;top:945px;width:145px;height:1px;background:#b0b0b0;"></div>
<div class="r" style="left:148px;top:517px;width:1423px;height:1px;background:#d4d4d4;"></div>
<div class="r" style="left:148px;top:624px;width:1423px;height:1px;background:#d4d4d4;"></div>
<div class="r" style="left:148px;top:731px;width:1423px;height:1px;background:#d4d4d4;"></div>
<div class="r" style="left:148px;top:838px;width:1423px;height:1px;background:#d4d4d4;"></div>
<div class="r" style="left:148px;top:945px;width:1423px;height:1px;background:#d4d4d4;"></div>
<div class="r" style="left:857px;top:411px;width:1px;height:540px;background:#d4d4d4;"></div>
<div class="r" style="left:1212px;top:411px;width:1px;height:540px;background:#d4d4d4;"></div>
<div class="r" style="left:1567px;top:411px;width:1px;height:540px;background:#d4d4d4;"></div>
<div class="r" style="left:148px;top:411px;width:710px;height:106px;background:#ffc000;"></div>
<div class="r" style="left:147px;top:409px;width:711px;height:2px;background:#217346;"></div>
<div class="r" style="left:146px;top:517px;width:2px;height:108px;background:#217346;"></div>
<div class="r" style="left:146px;top:516px;width:713px;height:110px;background:transparent;border:2px solid #217346;"></div>
<div class="r" style="left:853px;top:620px;width:7px;height:7px;background:#fff;"></div>
<div class="r" style="left:857px;top:620px;width:1px;height:4px;background:#fff;"></div>
<div class="r" style="left:854px;top:621px;width:6px;height:6px;background:#217346;"></div>
<div class="r" style="left:2px;top:951px;width:1569px;height:1px;background:#a0a0a0;"></div>
<div class="r" style="left:1570px;top:410px;width:1px;height:542px;background:#a0a0a0;"></div>
<span class="t" style="left:479.86px;top:320px;font-size:75.6px;line-height:84px;color:#1a5e37;transform:scaleX(0.9176);">A</span>
<span class="t" style="left:1014.42px;top:320px;font-size:75.6px;line-height:84px;color:#000;transform:scaleX(0.8351);">B</span>
<span class="t" style="left:1366.11px;top:320px;font-size:75.6px;line-height:84px;color:#000;transform:scaleX(0.8564);">C</span>
<span class="t" style="left:55.56px;top:424px;font-size:76.6px;line-height:85px;color:#000;">1</span>
<span class="t" style="left:55.09px;top:531px;font-size:76.6px;line-height:85px;color:#1a5e37;transform:scaleX(0.9371);">2</span>
<span class="t" style="left:56.31px;top:638px;font-size:76.6px;line-height:85px;color:#000;transform:scaleX(0.8536);">3</span>
<span class="t" style="left:53.38px;top:745px;font-size:76.6px;line-height:85px;color:#000;transform:scaleX(0.9793);">4</span>
<span class="t" style="left:57.99px;top:852px;font-size:76.6px;line-height:85px;color:#000;transform:scaleX(0.8178);">5</span>
<div class="r" style="left:59px;top:485.8px;width:15.7px;height:7.2px;background:#e6e6e6;"></div>
<div class="r" style="left:81.75px;top:485.8px;width:15px;height:7.2px;background:#e6e6e6;"></div>
<span class="t" style="left:416.84px;top:430px;font-size:68.3px;line-height:76px;color:#002060;transform:scaleX(0.8424);font-weight:700;text-shadow:0.7px 0 0 #002060,-0.7px 0 0 #002060;">LINKS</span>
<span class="t" style="left:300.88px;top:540px;font-size:61px;line-height:68px;color:#954f72;transform:scaleX(0.9726);">An</span>
<span class="t" style="left:389.54px;top:540px;font-size:61px;line-height:68px;color:#954f72;transform:scaleX(0.9719);">Existing</span>
<span class="t" style="left:612px;top:540px;font-size:61px;line-height:68px;color:#954f72;transform:scaleX(0.9395);">File</span>
<div class="r" style="left:300px;top:603px;width:405px;height:4px;background:#954f72;"></div>
<!-- sec_bottom -->
<div class="r" style="left:1571px;top:307px;width:30px;height:645px;background:#e6e6e6;"></div>
<div class="r" style="left:1573px;top:333px;width:25px;height:595px;background:#dcdcdc;"></div>
<div class="r" style="left:1573px;top:308px;width:25px;height:25px;background:#fff;border:1px solid #777;"></div>
<svg class="i" style="left:1579px;top:316px;" width="13" height="8" viewBox="0 0 13 8"><path d="M0.6 7L6.4 1L12.2 7Z" fill="#777"/></svg>
<div class="r" style="left:1573px;top:333px;width:25px;height:148px;background:#fff;border:1px solid #777;"></div>
<div class="r" style="left:1573px;top:928px;width:25px;height:25px;background:#fff;border:1px solid #777;"></div>
<svg class="i" style="left:1579px;top:937px;" width="13" height="8" viewBox="0 0 13 8"><path d="M0.6 1L6.4 7L12.2 1Z" fill="#777"/></svg>
<div class="r" style="left:2px;top:952px;width:1599px;height:33px;background:#e6e6e6;"></div>
<svg class="i" style="left:31px;top:962px;" width="7" height="11" viewBox="0 0 7 11"><path d="M6.2 0V11L0 5.5Z" fill="#c2c2c2"/></svg>
<svg class="i" style="left:66px;top:962px;" width="7" height="11" viewBox="0 0 7 11"><path d="M0 0V11L6.2 5.5Z" fill="#c2c2c2"/></svg>
<div class="r" style="left:120px;top:951px;width:90px;height:31px;background:#fff;border-left:1px solid #b4b4b4;border-right:1px solid #b4b4b4;border-bottom:2px solid #217346;"></div>
<span class="t" style="left:132.04px;top:956px;font-size:20.35px;line-height:22px;color:#1e7145;transform:scaleX(0.9576);font-weight:700;">Sheet1</span>
<span class="t" style="left:222.73px;top:956px;font-size:20.35px;line-height:22px;color:#444;transform:scaleX(0.9368);">Sheet2</span>
<div class="r" style="left:297px;top:955px;width:1px;height:26px;background:#ababab;"></div>
<svg class="i" style="left:336px;top:956px;" width="24" height="24" viewBox="0 0 24 24"><circle cx="11.8" cy="11.8" r="10.2" fill="none" stroke="#777" stroke-width="1.4"/><path d="M6.6 11.8H17M11.8 6.6V17" stroke="#777" stroke-width="1.6"/></svg>
<div class="r" style="left:957.6px;top:961px;width:3px;height:3px;background:#b3b3b3;"></div>
<div class="r" style="left:957.6px;top:966.4px;width:3px;height:3px;background:#b3b3b3;"></div>
<div class="r" style="left:957.6px;top:971.8px;width:3px;height:3px;background:#b3b3b3;"></div>
<div class="r" style="left:1003px;top:955px;width:545px;height:25px;background:#dcdcdc;"></div>
<div class="r" style="left:978px;top:955px;width:26px;height:25px;background:#fff;border:1px solid #777;"></div>
<svg class="i" style="left:987px;top:962px;" width="8" height="11" viewBox="0 0 8 11"><path d="M7 0.4V10.6L0.6 5.5Z" fill="#555"/></svg>
<div class="r" style="left:1003px;top:955px;width:272px;height:25px;background:#fff;border:1px solid #777;"></div>
<div class="r" style="left:1547px;top:955px;width:25px;height:25px;background:#fff;border:1px solid #777;"></div>
<svg class="i" style="left:1556px;top:962px;" width="8" height="11" viewBox="0 0 8 11"><path d="M0.6 0.4V10.6L7 5.5Z" fill="#555"/></svg>
<div class="r" style="left:2px;top:985px;width:1599px;height:33px;background:#f3f2f1;"></div>
<div class="r" style="left:2px;top:985px;width:1599px;height:1px;background:#cfcfcf;"></div>
<span class="t" style="left:11.58px;top:995px;font-size:16px;line-height:17px;color:#444;transform:scaleX(0.9331);">Ready</span>
<svg class="i" style="left:83px;top:993px;" width="23" height="20" viewBox="0 0 23 20"><g fill="none" stroke="#444" stroke-width="1.4"><path d="M7.4 17.5H1V0.9H21.3V6"/><path d="M1 3.7H21.3"/><path d="M3.6 7.1H8.4M3.6 9.9H7.4M3.6 12.9H6.8" stroke-width="1.3"/><circle cx="14.8" cy="12.5" r="6"/><circle cx="14.8" cy="12.5" r="2.8" fill="#444" stroke="none"/></g></svg>
<svg class="i" style="left:129px;top:991px;" width="23" height="22" viewBox="0 0 23 22"><g fill="none" stroke="#444" stroke-width="1.3" stroke-linecap="round" stroke-linejoin="round"><circle cx="10.3" cy="3.8" r="2.4"/><path d="M11.7 16.8L10.6 14.8L7.7 20.3C6.5 21.7 4.2 20.9 4.4 19.3L6.6 9.2L2.2 7.4C1 6.8 1.1 4.7 2.3 4.4C3.4 4.2 6 6 7.8 6.6H13.2C15 6 17.6 4.2 18.8 4.4C20 4.7 20.2 6.7 19 7.2L14.5 8.9L12.9 12"/><path d="M12.6 11.4L22 20.8M22 11.4L12.6 20.8" stroke-linecap="butt"/></g></svg>
<span class="t" style="left:156.77px;top:995px;font-size:16px;line-height:17px;color:#444;transform:scaleX(0.9579);">Accessibility: Investigate</span>
<div class="r" style="left:1139px;top:986px;width:60px;height:32px;background:#d2d0ce;"></div>
<svg class="i" style="left:1158.4px;top:991.7px;" width="20" height="20" viewBox="0 0 20 20"><g fill="#dadada" stroke="#444" stroke-width="1.7"><rect x="0.9" y="0.9" width="18" height="17.6"/><path d="M6.9 1V18.4M12.9 1V18.4M1 6.8H18.8M1 12.7H18.8" fill="none"/></g></svg>
<svg class="i" style="left:1218.4px;top:991.7px;" width="22" height="20" viewBox="0 0 22 20"><g fill="#fff" stroke="#444" stroke-width="1.7"><rect x="0.9" y="0.9" width="19.2" height="17.6"/><rect x="5.2" y="4.6" width="10.6" height="10.4" fill="none"/><path d="M7.6 7.4H13.4M7.6 9.9H13.4M7.6 12.4H13.4" stroke-width="1.3"/></g></svg>
<svg class="i" style="left:1278.4px;top:991.7px;" width="22" height="20" viewBox="0 0 22 20"><g fill="none" stroke="#444" stroke-width="1.7"><rect x="0.9" y="0.9" width="19.2" height="17.6"/><path d="M6.8 1V11.7M12.8 1V11.7M1 11.7H13.6" fill="none"/></g></svg>
<div class="r" style="left:1327px;top:1001.2px;width:11.4px;height:1.4px;background:#555;"></div>
<div class="r" style="left:1347px;top:1001px;width:148px;height:2px;background:#3b3a39;"></div>
<div class="r" style="left:1420px;top:998px;width:2px;height:8px;background:#3b3a39;"></div>
<div class="r" style="left:1481px;top:993px;width:8px;height:17px;background:#777;"></div>
<svg class="i" style="left:1503px;top:996px;" width="12" height="12" viewBox="0 0 12 12"><path d="M0.4 5.8H11.4M5.9 0.4V11.2" stroke="#555" stroke-width="1.4"/></svg>
<span class="t" style="left:1533.11px;top:995px;font-size:16px;line-height:17px;color:#444;transform:scaleX(0.9713);">370%</span>
</div>
</body></html>
